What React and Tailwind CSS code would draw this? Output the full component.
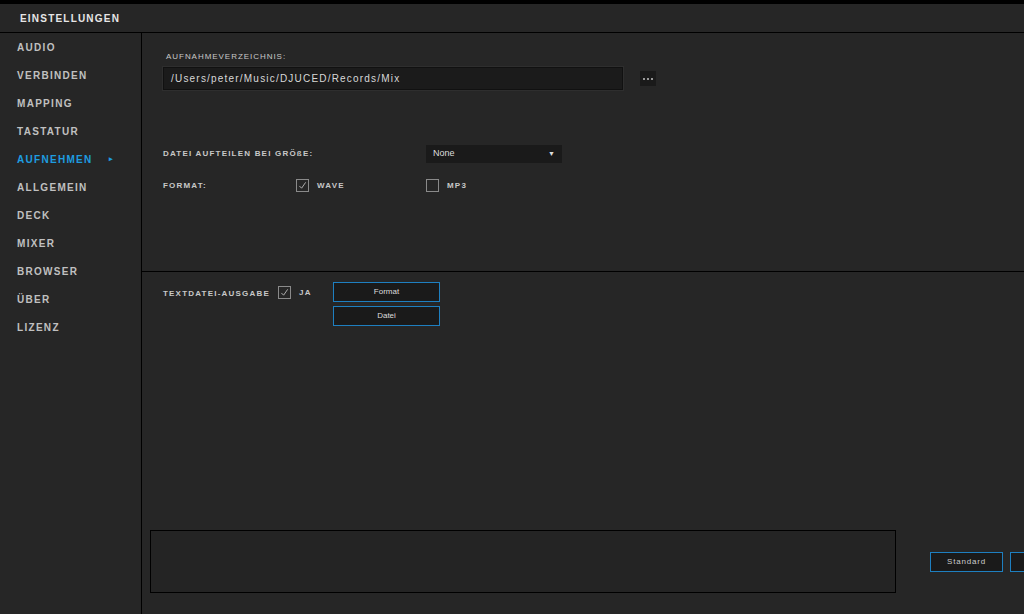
const font = { fontFamily: '"Liberation Sans", Arial, sans-serif' };

const nav = ['AUDIO', 'VERBINDEN', 'MAPPING', 'TASTATUR', 'AUFNEHMEN', 'ALLGEMEIN', 'DECK', 'MIXER', 'BROWSER', 'ÜBER', 'LIZENZ'];

function Check({ checked }) {
  return (
    <span className="w-[13px] h-[13px] shrink-0 border border-[#8a8a8a] flex items-center justify-center">
      {checked && (
        <svg width="9" height="9" viewBox="0 0 10 10" fill="none" stroke="#bbb" strokeWidth="1">
          <path d="M1.5 5.5 L4 8 L8.5 1.5" />
        </svg>
      )}
    </span>
  );
}

const label = 'text-[8px] font-bold tracking-[0.15em] text-[#c8c8c8]';

export default function App() {
  return (
    <div className="h-[614px] w-[1024px] bg-[#262626] flex flex-col overflow-hidden" style={font}>
      <div className="h-[4px] bg-black" />
      <div className="h-[29px] flex items-center pl-5 border-b border-black">
        <span className="text-[10px] font-bold tracking-[0.12em] text-[#e6e6e6]">EINSTELLUNGEN</span>
      </div>
      <div className="flex flex-1">
        <div className="w-[142px] shrink-0 border-r border-black">
          {nav.map((n) => (
            <div key={n} className={`h-[28px] flex items-center pl-[17px] text-[10px] font-bold tracking-[0.13em] ${n === 'AUFNEHMEN' ? 'text-[#1e9de0]' : 'text-[#c0c0c0]'}`}>
              {n}
              {n === 'AUFNEHMEN' && <span className="ml-[16px] text-[7px]">▸</span>}
            </div>
          ))}
        </div>
        <div className="flex-1 flex flex-col">
          <div className="h-[239px] border-b border-black pl-[21px] pt-[18px]">
            <div className="pl-[3px] text-[8px] tracking-[0.12em] text-[#c8c8c8]">AUFNAHMEVERZEICHNIS:</div>
            <div className="flex items-center mt-[4px]">
              <div className="w-[460px] h-[23px] bg-[#1b1b1b] border border-[#111] shadow-[0_0_0_1px_#2e2e2e] flex items-center pl-[7px] text-[10px] tracking-[0.12em] text-[#d8d8d8]">
                /Users/peter/Music/DJUCED/Records/Mix
              </div>
              <div className="ml-[17px] w-[16px] h-[15px] bg-[#1a1a1a] flex items-center justify-center gap-[2px]">
                <span className="w-[2px] h-[2px] bg-[#999]" /><span className="w-[2px] h-[2px] bg-[#999]" /><span className="w-[2px] h-[2px] bg-[#999]" />
              </div>
            </div>
            <div className="flex items-center mt-[55px]">
              <span className={`${label} w-[263px]`}>DATEI AUFTEILEN BEI GRÖßE:</span>
              <div className="w-[136px] h-[18px] bg-[#1a1a1a] flex items-center justify-between px-[7px] text-[9px] text-[#ddd]">
                None<span className="text-[7px]">▼</span>
              </div>
            </div>
            <div className="flex items-center mt-[16px]">
              <span className={`${label} w-[133px]`}>FORMAT:</span>
              <Check checked />
              <span className={`${label} ml-[8px] w-[109px]`}>WAVE</span>
              <Check />
              <span className={`${label} ml-[8px]`}>MP3</span>
            </div>
          </div>
          <div className="pl-[21px] pt-[10px] flex items-start">
            <span className={`${label} w-[115px] mt-[6px]`}>TEXTDATEI-AUSGABE</span>
            <div className="mt-[4px] flex items-center">
              <Check checked />
              <span className={`${label} ml-[8px] w-[34px]`}>JA</span>
            </div>
            <div className="flex flex-col gap-[4px]">
              <button className="w-[107px] h-[20px] bg-[#1a1a1a] border border-[#1e7fc0] text-[8px] text-[#ddd]">Format</button>
              <button className="w-[107px] h-[20px] bg-[#1a1a1a] border border-[#1e7fc0] text-[8px] text-[#ddd]">Datei</button>
            </div>
          </div>
          <div className="mt-auto mb-[21px] pl-[8px] flex items-center">
            <div className="w-[746px] h-[63px] shrink-0 border border-black bg-[#242424]" />
            <button className="ml-[34px] w-[73px] h-[20px] shrink-0 bg-[#1a1a1a] border border-[#1e7fc0] text-[8px] tracking-[0.1em] text-[#ccc]">Standard</button>
            <button className="ml-[7px] w-[73px] h-[20px] bg-[#1a1a1a] border border-[#1e7fc0] shrink-0" />
          </div>
        </div>
      </div>
    </div>
  );
}
